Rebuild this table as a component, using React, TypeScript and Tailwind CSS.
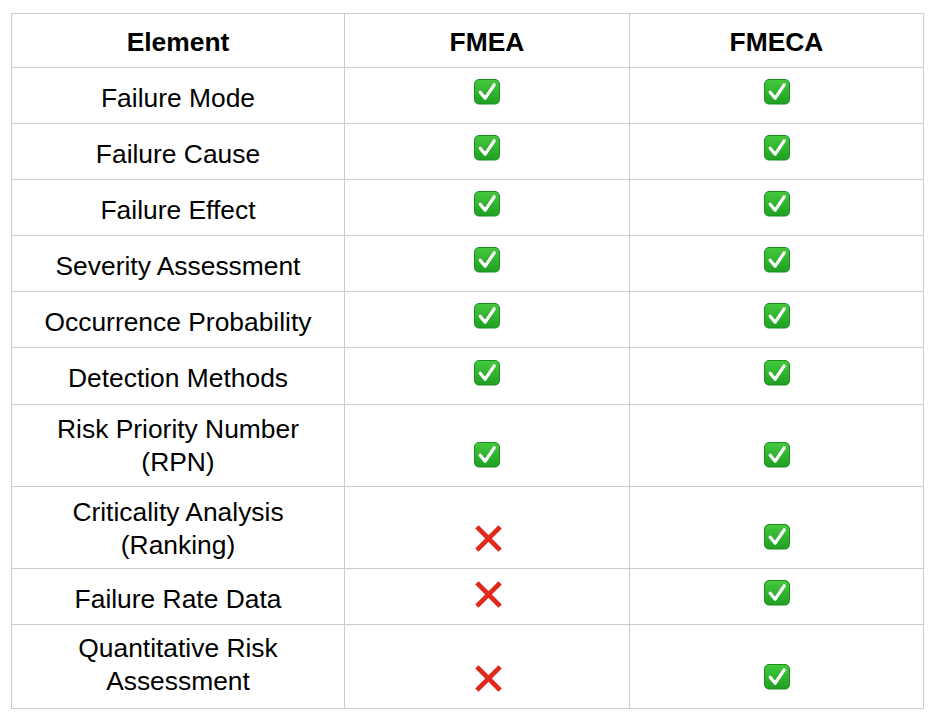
import React from "react";

type Row = { label: string[]; fmea: boolean; fmeca: boolean; h: string; pt: string };

const rows: Row[] = [
  { label: ["Failure Mode"], fmea: true, fmeca: true, h: "h-[56px]", pt: "pt-[14px]" },
  { label: ["Failure Cause"], fmea: true, fmeca: true, h: "h-[56px]", pt: "pt-[14px]" },
  { label: ["Failure Effect"], fmea: true, fmeca: true, h: "h-[56px]", pt: "pt-[14px]" },
  { label: ["Severity Assessment"], fmea: true, fmeca: true, h: "h-[56px]", pt: "pt-[14px]" },
  { label: ["Occurrence Probability"], fmea: true, fmeca: true, h: "h-[56px]", pt: "pt-[14px]" },
  { label: ["Detection Methods"], fmea: true, fmeca: true, h: "h-[57px]", pt: "pt-[14px]" },
  { label: ["Risk Priority Number", "(RPN)"], fmea: true, fmeca: true, h: "h-[82px]", pt: "pt-[8px]" },
  { label: ["Criticality Analysis", "(Ranking)"], fmea: false, fmeca: true, h: "h-[82px]", pt: "pt-[9px]" },
  { label: ["Failure Rate Data"], fmea: false, fmeca: true, h: "h-[56px]", pt: "pt-[14px]" },
  { label: ["Quantitative Risk", "Assessment"], fmea: false, fmeca: true, h: "h-[84px]", pt: "pt-[7px]" },
];

function Check() {
  return (
    <svg width="26" height="26" viewBox="0 0 26 26" aria-label="yes">
      <defs>
        <linearGradient id="g" x1="0" y1="0" x2="0" y2="1">
          <stop offset="0" stopColor="#45c93f" />
          <stop offset="1" stopColor="#1f9f22" />
        </linearGradient>
      </defs>
      <rect x="0.5" y="0.5" width="25" height="24.5" rx="4.5" fill="url(#g)" stroke="#1b8e1d" strokeWidth="1" />
      <path d="M6.2 13.2 L11.2 19.2 L20.2 5.8" fill="none" stroke="#ffffff" strokeWidth="3.2" strokeLinecap="round" strokeLinejoin="round" />
    </svg>
  );
}

function Cross() {
  return (
    <svg width="27" height="27" viewBox="0 0 27 27" aria-label="no" className="ml-[3px]">
      <path d="M3.5 3.5 L23.5 23.5 M23.5 3.5 L3.5 23.5" stroke="#e1281d" strokeWidth="4.6" strokeLinecap="square" fill="none" />
    </svg>
  );
}

const cell = "border-r border-b border-[#cccccc]";

export default function App() {
  return (
    <div className="w-[932px] h-[716px] bg-white text-black overflow-hidden" style={{ fontFamily: '"Liberation Sans", Arial, Helvetica, sans-serif' }}>
      <div className="ml-[11px] mt-[13px] w-[913px] border-l border-t border-[#cccccc] grid grid-cols-[333px_285px_294px] text-[26.4px] leading-[33px]">
        <div className={`${cell} h-[54px] pt-[12px] text-center font-bold`}>Element</div>
        <div className={`${cell} h-[54px] pt-[12px] text-center font-bold`}>FMEA</div>
        <div className={`${cell} h-[54px] pt-[12px] text-center font-bold`}>FMECA</div>
        {rows.map((r) => (
          <React.Fragment key={r.label.join(" ")}>
            <div className={`${cell} ${r.h} ${r.pt} text-center`}>
              {r.label.map((l) => (
                <div key={l}>{l}</div>
              ))}
            </div>
            <div className={`${cell} ${r.h} flex justify-center items-end ${r.fmea ? "pb-[18px]" : "pb-[16px]"}`}>
              {r.fmea ? <Check /> : <Cross />}
            </div>
            <div className={`${cell} ${r.h} flex justify-center items-end pb-[18px]`}>
              {r.fmeca ? <Check /> : <Cross />}
            </div>
          </React.Fragment>
        ))}
      </div>
    </div>
  );
}
